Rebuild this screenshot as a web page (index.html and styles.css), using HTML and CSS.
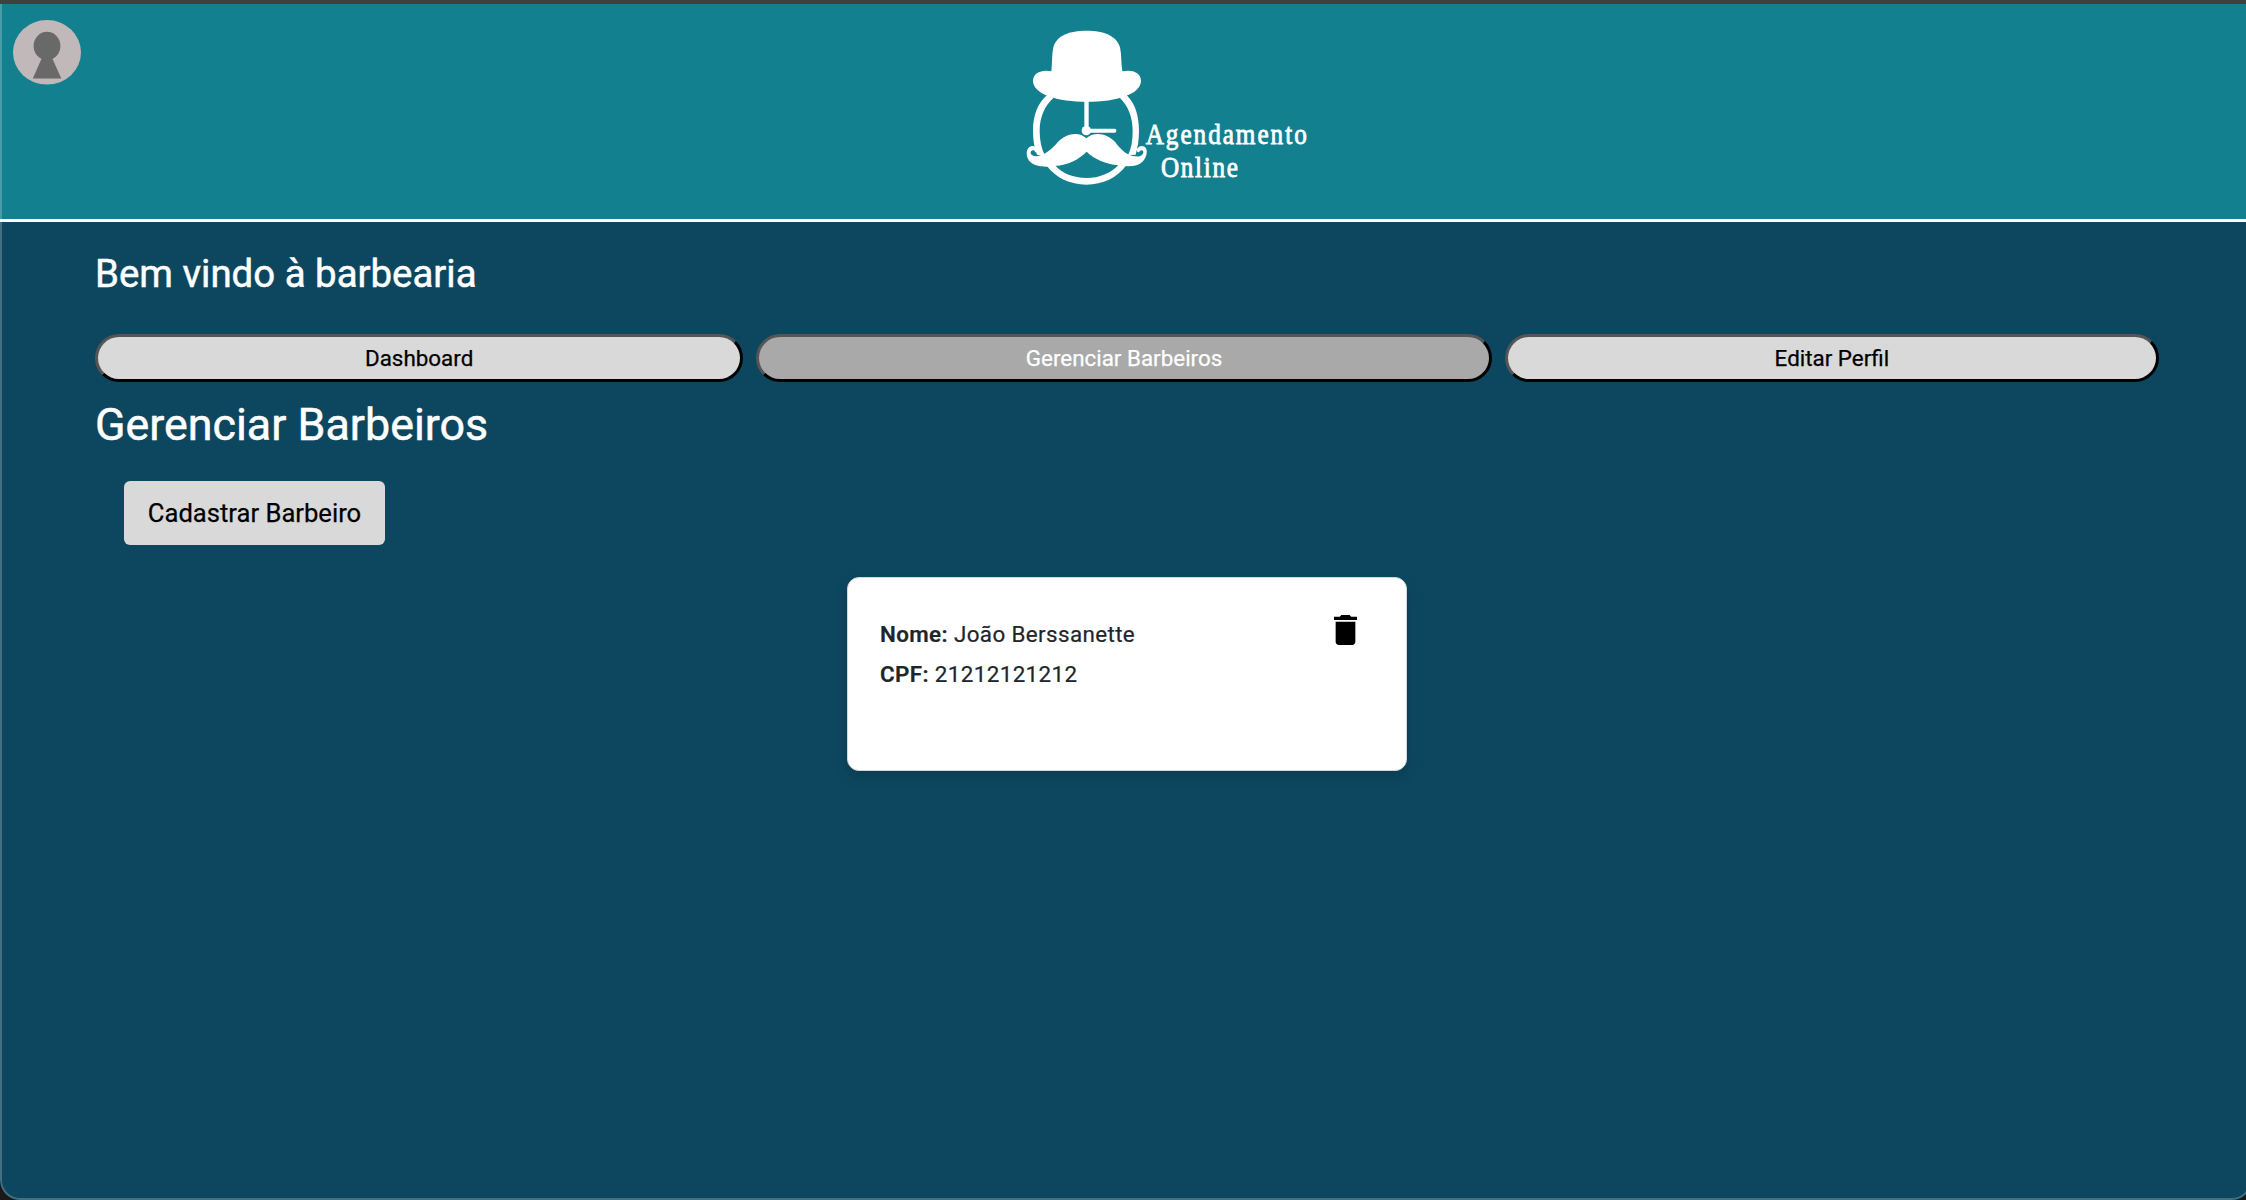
FILE: index.html
```html
<!DOCTYPE html>
<html lang="pt-BR">
<head>
<meta charset="utf-8">
<title>Agendamento Online</title>
<link rel="stylesheet" href="styles.css">
</head>
<body>
<div class="app">
  <header class="header">
    <svg class="avatar" viewBox="0 0 68 65" role="img" aria-label="Perfil">
      <ellipse cx="34" cy="32.3" rx="34" ry="32.3" fill="#c1b8ba"/>
      <ellipse cx="34" cy="26" rx="13.4" ry="14.2" fill="#696969"/>
      <path d="M29.3 37h9.4L48.3 58.5H19.8z" fill="#696969"/>
    </svg>
    <svg class="logo" viewBox="45 40 930 474" role="img" aria-label="Agendamento Online">
      <g fill="#fff">
        <path d="M124 170C127 145 125 120 130 98C140 62 178 48 230 48C282 48 321 64 330 98C335 120 333 145 337 170C365 164 393 172 393 199C393 218 373 236 349 243C318 256 275 261 231 261C188 261 148 257 112 243C87 234 69 217 69 199C69 174 96 164 124 170z"/>
        <path d="M112 240C82 266 69 304 69 348C69 376 73 399 81 420L106 425C94 402 89 377 89 349C89 308 103 274 131 249z"/>
        <path d="M349 240C376 266 387 304 387 348C387 376 383 399 377 420L354 422C364 402 368 377 368 349C368 308 355 274 329 249z"/>
        <path d="M109 452C137 490 180 510 229 510C279 510 321 490 349 452L325 451C303 476 268 490 229 490C190 490 157 477 135 452z"/>
        <rect x="223" y="255" width="13" height="85"/>
        <rect x="235" y="342" width="84" height="12" rx="5"/>
        <circle cx="229" cy="348" r="14"/>
        <path d="M230 411C208 434 173 451 135 454C105 459 76 456 62 443C48 430 47 408 56 399C64 391 79 393 82 405C84 412 78 416 75 411C72 404 63 407 62 413C62 423 73 426 84 424C106 420 124 405 143 383C165 357 207 348 229 371C252 348 295 357 316 383C334 407 353 424 376 425C390 427 400 421 400 412C398 403 390 407 388 412C384 415 379 411 381 404C386 392 401 390 408 401C414 413 408 434 393 445C379 456 354 457 325 452C288 448 253 434 230 411z"/>
      </g>
      <g class="logo-text">
        <text transform="translate(407 388) scale(.86 1)" textLength="562">Agendamento</text>
        <text transform="translate(453 486) scale(.86 1)" textLength="268">Online</text>
      </g>
    </svg>
  </header>
  <main class="content">
    <h2 class="welcome">Bem vindo à barbearia</h2>
    <nav class="tabs">
      <button class="tab tab-dashboard">Dashboard</button>
      <button class="tab tab-barbers active">Gerenciar Barbeiros</button>
      <button class="tab tab-profile">Editar Perfil</button>
    </nav>
    <h1 class="title">Gerenciar Barbeiros</h1>
    <button class="register">Cadastrar Barbeiro</button>
    <section class="card">
      <div class="info">
        <p><strong>Nome:</strong> João Berssanette</p>
        <p><strong>CPF:</strong> 21212121212</p>
      </div>
      <svg class="trash" viewBox="5 3 14 18" preserveAspectRatio="none" role="img" aria-label="Excluir">
        <path d="M6 19c0 1.100.9 2 2 2h8c1.100 0 2-.9 2-2V7H6zM19 4h-3.500l-1-1h-5l-1 1H5v2h14z"/>
      </svg>
    </section>
  </main>
</div>
</body>
</html>
```
FILE: styles.css
```css
* { box-sizing: border-box; }
body {
  margin: 0;
  height: 1200px;
  overflow: hidden;
  background: #1b1918;
  font-family: Roboto, sans-serif;
}
.app {
  position: relative;
  width: 2252px;
  height: 1200px;
  overflow: hidden;
  border-top: 4px solid #404040;
  border-radius: 0 0 20px 20px;
  background: #0d475f;
}
/* thin light edge of the window */
.app::after {
  content: "";
  position: absolute;
  inset: 0;
  border: solid rgba(255, 255, 255, .22);
  border-width: 0 2px 2px;
  border-radius: 0 0 20px 20px;
  pointer-events: none;
}
.header {
  display: flex;
  align-items: flex-start;
  height: 218px;
  padding: 16px 0 0 13px;
  border-bottom: 3px solid #fff;
  background: #13808f;
}
.avatar { width: 68px; height: 65px; }
.logo { width: 310px; height: 158px; margin: 8px 0 0 944px; overflow: visible; }
.logo-text {
  fill: #fff;
  stroke: #fff;
  stroke-width: 2.500;
  font: 88px "Liberation Serif", serif;
}
.content { display: flex; flex-direction: column; width: 2159px; padding: 27px 0 0 95px; }
h1, h2, p { margin: 0; }
.welcome, .title {
  color: #fff;
  font-weight: 400;
  white-space: nowrap;
  -webkit-text-stroke: .5px #fff;
}
.welcome { font-size: 38.400px; line-height: 50px; }
.tabs { display: flex; gap: 13px; margin-top: 35px; }
.tab {
  height: 48px;
  padding: 0;
  border: 3px solid;
  border-color: #555 #000 #000 #555;
  border-radius: 24px;
  background: #d9d9d9;
  color: #000;
  font: 22.400px Roboto, sans-serif;
  -webkit-text-stroke: .25px;
}
.tab-dashboard { flex: 648 0 0; }
.tab-barbers { flex: 736 0 0; }
.tab-profile { flex: 654 0 0; }
.tab.active { background: #a9a9a9; color: #fff; }
.title { margin-top: 15px; font-size: 44.800px; line-height: 56px; }
.register {
  width: 261px;
  height: 64px;
  margin: 28px 0 0 29px;
  padding: 0;
  border: 0;
  border-radius: 6px;
  background: #d9d9d9;
  color: #000;
  font: 25.600px Roboto, sans-serif;
  -webkit-text-stroke: .25px;
}
.card {
  display: flex;
  justify-content: space-between;
  align-items: flex-start;
  align-self: center;
  width: 560px;
  height: 194px;
  margin-top: 32px;
  padding: 37px 49px 0 32px;
  border: 1px solid #cfd8dc;
  border-radius: 12px;
  background: #fff;
  box-shadow: 0 6px 12px rgba(0, 0, 0, .15);
}
.info {
  margin-top: -1px;
  color: #212529;
  font-size: 22.400px;
  line-height: 40px;
  letter-spacing: .38px;
  -webkit-text-stroke: .2px;
}
.info strong { font-weight: 600; }
.trash { width: 23px; height: 30px; }
```
